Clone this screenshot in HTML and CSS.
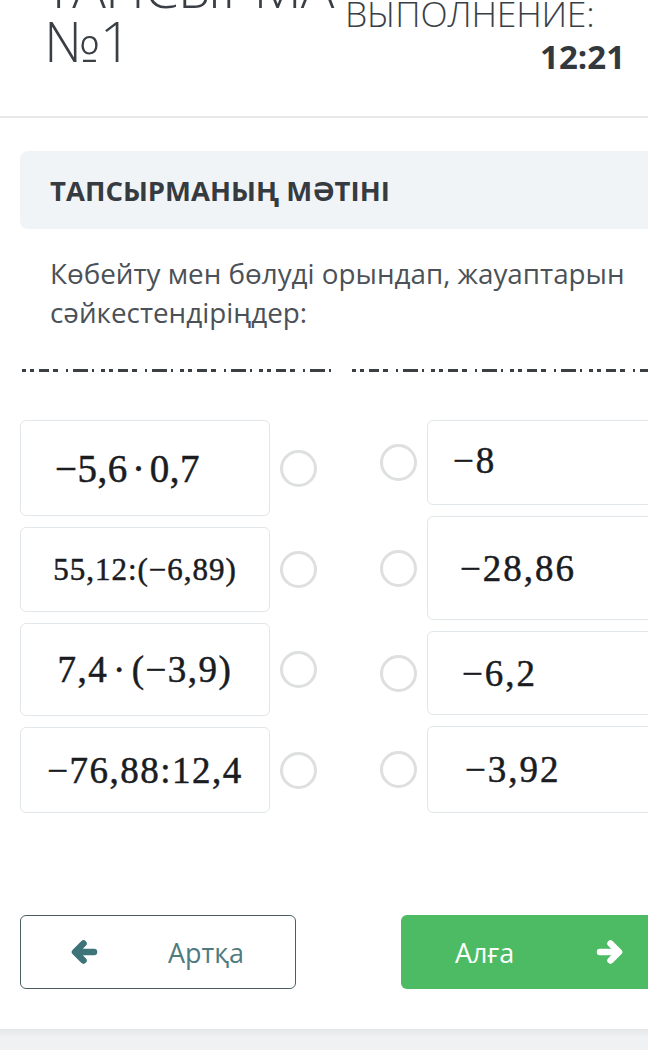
FILE: index.html
```html
<!DOCTYPE html>
<html lang="kk">
<head>
<meta charset="utf-8">
<title>ТАПСЫРМА №1</title>
<link rel="stylesheet" href="styles.css">
</head>
<body>
<header class="top">
  <h1 class="title">ТАПСЫРМА №1</h1>
  <div class="timer">
    <div class="timer-label">ВРЕМЯ НА<br>ВЫПОЛНЕНИЕ:</div>
    <div class="timer-value">12:21</div>
  </div>
</header>

<main class="content">
  <section class="task-head">
    <h2 class="task-title">ТАПСЫРМАНЫҢ МӘТІНІ</h2>
  </section>

  <p class="task-text">Көбейту мен бөлуді орындап, жауаптарын сәйкестендіріңдер:</p>

  <div class="cut-rule">
    <span class="cut cut-a"></span>
    <span class="cut cut-b"></span>
  </div>

  <div class="match">
    <div class="col col-left">
      <div class="item">
        <div class="card card-l1 expr expr-lg start">−5,6 · 0,7</div>
        <span class="radio"></span>
      </div>
      <div class="item">
        <div class="card card-l2 expr expr-sm">55,12:(−6,89)</div>
        <span class="radio"></span>
      </div>
      <div class="item">
        <div class="card card-l3 expr expr-md">7,4 · (−3,9)</div>
        <span class="radio"></span>
      </div>
      <div class="item">
        <div class="card card-l4 expr expr-md">−76,88:12,4</div>
        <span class="radio"></span>
      </div>
    </div>
    <div class="col col-right">
      <div class="item">
        <span class="radio"></span>
        <div class="card card-r1 ans ans-top">−8</div>
      </div>
      <div class="item">
        <span class="radio"></span>
        <div class="card card-r2 ans">−28,86</div>
      </div>
      <div class="item">
        <span class="radio"></span>
        <div class="card card-r3 ans">−6,2</div>
      </div>
      <div class="item">
        <span class="radio"></span>
        <div class="card card-r4 ans">−3,92</div>
      </div>
    </div>
  </div>

  <nav class="pager">
    <button class="btn btn-back" type="button">
      <svg class="arrow" viewBox="0 0 28 26" aria-hidden="true"><path d="M24 13H7M13.5 4.5L5 13l8.5 8.5"/></svg>
      <span class="btn-text">Артқа</span>
    </button>
    <button class="btn btn-next" type="button">
      <span class="btn-text">Алға</span>
      <svg class="arrow" viewBox="0 0 28 26" aria-hidden="true"><path d="M4 13h17M14.5 4.5L23 13l-8.5 8.5"/></svg>
    </button>
  </nav>
</main>
<div class="bottom-band"></div>
</body>
</html>
```
FILE: styles.css
```css
html, body {
  margin: 0;
  padding: 0;
}
body {
  background: #ffffff;
  font-family: "Open Sans", "Noto Sans", sans-serif;
  color: #3b4046;
  overflow: hidden;
  width: 648px;
}

/* header */
.top {
  display: flex;
  justify-content: space-between;
  align-items: flex-start;
  height: 118px;
  box-sizing: border-box;
  border-bottom: 2px solid #e7e9ea;
  padding: 0 23px 0 44px;
  overflow: hidden;
}
.title {
  margin: -41px 0 0 0;
  width: 296px;
  font-size: 56px;
  line-height: 54px;
  font-weight: 300;
  color: #3a3f45;
  letter-spacing: -1px;
}
.timer {
  display: flex;
  flex-direction: column;
  width: 280px;
  margin-top: -38px;
}
.timer-label {
  font-size: 35.5px;
  line-height: 34px;
  font-weight: 300;
  color: #3a3f45;
  letter-spacing: -0.2px;
}
.timer-value {
  align-self: flex-end;
  margin-top: 7px;
  font-size: 33px;
  line-height: 40px;
  font-weight: 700;
  color: #33383d;
}

/* content */
.content {
  width: 700px;
}
.task-head {
  margin: 33px 0 0 20px;
  height: 78px;
  background: #f1f4f6;
  border-radius: 8px 0 0 8px;
  display: flex;
  align-items: center;
  padding-left: 30px;
}
.task-title {
  margin: 0;
  font-size: 27.5px;
  font-weight: 700;
  color: #363b41;
}
.task-text {
  margin: 25px 0 0 0;
  padding-left: 50px;
  width: 598px;
  font-size: 27.8px;
  line-height: 39px;
  color: #4b5157;
}

.cut-rule {
  display: flex;
  gap: 17px;
  margin: 37px 0 0 22px;
  height: 3px;
}
.cut {
  height: 3px;
  background: repeating-linear-gradient(90deg,
    #3b4045 0 4px, transparent 4px 8px,
    #3b4045 8px 12px, transparent 12px 17px,
    #3b4045 17px 27px, transparent 27px 31px,
    #3b4045 31px 36px, transparent 36px 44px,
    #3b4045 44px 46px, transparent 46px 51px,
    #3b4045 51px 66px, transparent 66px 70px,
    #3b4045 70px 72px, transparent 72px 79px);
}
.cut-a { width: 313px; }
.cut-b { width: 300px; }

/* matching */
.match {
  display: flex;
  margin-top: 48px;
  padding-left: 20px;
}
.col {
  display: flex;
  flex-direction: column;
  gap: 11px;
}
.col-right {
  margin-left: 63px;
}
.item {
  display: flex;
  align-items: center;
  gap: 10px;
}
.card {
  box-sizing: border-box;
  width: 250px;
  border: 1px solid #e2e7eb;
  border-radius: 6px;
  background: #fff;
  display: flex;
  align-items: center;
  font-family: "Liberation Serif", "DejaVu Serif", serif;
  color: #1a1c1f;
  -webkit-text-stroke: 0.5px #1a1c1f;
  white-space: pre;
}
.radio {
  flex: none;
  width: 37px;
  height: 37px;
  box-sizing: border-box;
  border: 3px solid #dedfe0;
  border-radius: 50%;
  background: #fff;
}
.expr {
  justify-content: center;
}
.expr.start {
  justify-content: flex-start;
  padding-left: 34px;
}
.expr-lg { font-size: 39px; letter-spacing: 0.5px; word-spacing: -6px; }
.expr-md { font-size: 37px; letter-spacing: 1.5px; word-spacing: -6px; }
.expr-sm { font-size: 31px; letter-spacing: 1px; }
.card-l1 { height: 96px; }
.card-l2 { height: 85px; }
.card-l3 { height: 93px; }
.card-l4 { height: 86px; }

.ans {
  padding-left: 25px;
  font-size: 37px;
  letter-spacing: 2px;
}
.ans-top { align-items: flex-start; padding-top: 18px; }
.card-r1 { height: 85px; }
.card-r2 { height: 104px; padding-left: 32px; }
.card-r3 { height: 84px; padding-left: 34px; }
.card-r4 { height: 87px; padding-left: 37px; }

/* buttons */
.pager {
  display: flex;
  gap: 105px;
  margin: 102px 0 0 20px;
}
.btn {
  height: 74px;
  border-radius: 6px;
  display: flex;
  align-items: center;
  font-family: "Open Sans", "Noto Sans", sans-serif;
  font-size: 27px;
  cursor: pointer;
  padding: 0;
}
.arrow {
  flex: none;
  width: 28px;
  height: 26px;
  fill: none;
  stroke-width: 6.5;
  stroke-linecap: round;
  stroke-linejoin: round;
}
.btn-back {
  width: 276px;
  background: #fff;
  border: 1.5px solid #4b5e64;
  padding-left: 49px;
  color: #4f7b80;
}
.btn-back .arrow {
  stroke: #3c7479;
}
.btn-back .btn-text {
  margin-left: 70px;
}
.btn-next {
  width: 270px;
  background: #4dbb63;
  border: none;
  color: #fff;
  padding-left: 54px;
}
.btn-next .arrow {
  stroke: #fff;
  margin-left: 82px;
}

.bottom-band {
  margin-top: 40px;
  height: 40px;
  background: linear-gradient(#e4e7e8, #eff1f2 8px, #eff1f2);
}
```
